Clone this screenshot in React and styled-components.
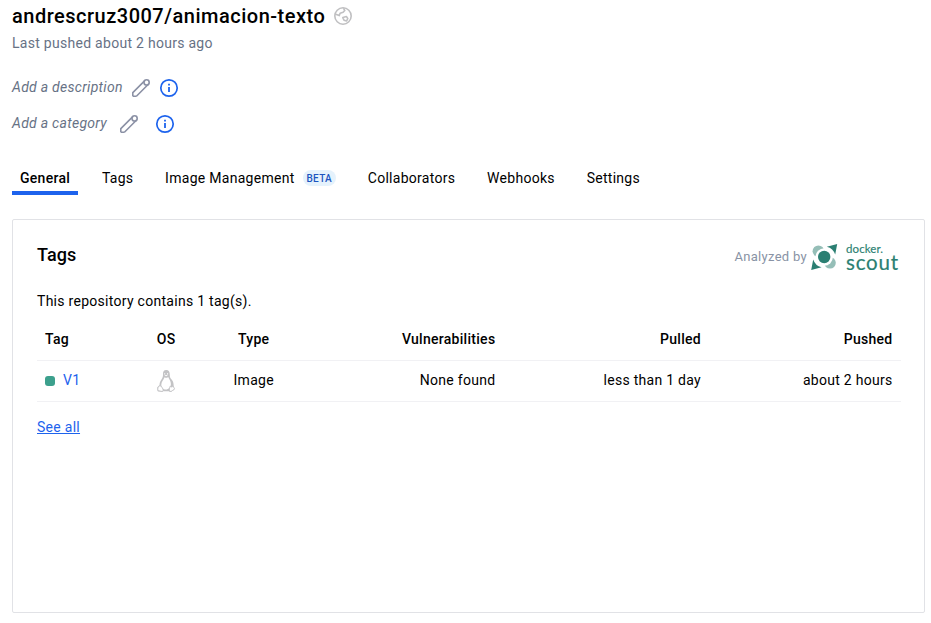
import React from "react";
import styled, { createGlobalStyle } from "styled-components";

const GlobalStyle = createGlobalStyle`
  *, *::before, *::after { box-sizing: border-box; }
  body {
    margin: 0;
    background: #fff;
    color: #000;
    font-family: Roboto, "Liberation Sans", sans-serif;
    font-size: 14px;
    line-height: 20px;
    letter-spacing: 0.28px;
  }
`;

const Page = styled.main`
  width: 931px;
  height: 623px;
  padding: 0 6px 10px 12px;
  display: flex;
  flex-direction: column;
  overflow: hidden;
`;

const TitleRow = styled.header`
  display: flex;
  align-items: center;
  gap: 8px;
  height: 32px;
`;

const Title = styled.h1`
  margin: 0;
  font-size: 20px;
  font-weight: 500;
  line-height: 32px;
  letter-spacing: 0.5px;
`;

const Pushed = styled.p`
  margin: 1px 0 0;
  color: #677285;
`;

const MetaList = styled.div`
  margin-top: 17px;
`;

const MetaRow = styled.div`
  display: flex;
  align-items: center;
  height: 36px;
`;

const MetaText = styled.span`
  color: #677285;
  font-style: italic;
  margin-right: ${(p) => p.$gap};
  padding-bottom: 2px;
`;

const IconGap = styled.span`
  width: ${(p) => p.$width};
`;

const Tabs = styled.nav`
  display: flex;
  margin-top: 20px;
  gap: 15.8px;
`;

const Tab = styled.a`
  display: flex;
  align-items: center;
  gap: 8px;
  height: 33px;
  padding: 2px 8px 0;
  border-bottom: 4px solid ${(p) => (p.$active ? "#1d63ed" : "transparent")};
  font-weight: ${(p) => (p.$active ? 500 : 400)};
`;

const Badge = styled.span`
  height: 16px;
  padding: 0 4px;
  border-radius: 8px;
  background: #e5f2fc;
  color: #1c54c0;
  font-size: 10px;
  font-weight: 500;
  line-height: 17px;
`;

const Card = styled.section`
  flex: 1;
  margin-top: 24px;
  padding: 22px 24px;
  border: 1px solid #e1e2e6;
  border-radius: 2px;
`;

const CardHeader = styled.div`
  display: flex;
  justify-content: space-between;
  align-items: flex-start;
  height: 49px;
`;

const CardTitle = styled.h2`
  margin: 0;
  font-size: 18px;
  font-weight: 500;
  line-height: 26px;
  letter-spacing: 0.1px;
`;

const Analyzed = styled.div`
  display: flex;
  align-items: center;
  height: 30px;
  color: #8993a5;
  font-size: 13px;
  letter-spacing: 0.3px;
  gap: 4px;
  margin-right: 1px;
`;

const Summary = styled.p`
  margin: 0;
`;

const Table = styled.div`
  margin-top: 7px;
  width: 863.5px;
`;

const Row = styled.div`
  display: grid;
  grid-template-columns: 92px 74.4px 100.6px 199.4px 205.6px 1fr;
  align-items: center;
  height: ${(p) => (p.$head ? "43px" : "41px")};
  padding-bottom: ${(p) => (p.$head ? "1px" : "2px")};
  border-bottom: 1px solid #f1f1f4;
  font-weight: ${(p) => (p.$head ? 500 : 400)};
`;

const Cell = styled.div`
  display: flex;
  align-items: center;
  justify-content: ${(p) => p.$align || "flex-start"};
  height: 20px;
  padding: 0 8px;
`;

const Status = styled.span`
  width: 10px;
  height: 10px;
  margin: 2px 8px 0 0;
  border-radius: 3px;
  background: #3ca08d;
`;

const TagLink = styled.a`
  color: #1d63ed;
`;

const SeeAll = styled.a`
  display: inline-block;
  margin-top: 15px;
  color: #1d63ed;
  text-decoration: underline;
`;

const Wordmark = styled.div`
  display: flex;
  flex-direction: column;
  width: 53px;
  height: 30px;
  margin-left: 4px;
  color: #2b7f72;
  font-family: Lato, sans-serif;
  font-weight: 400;
  white-space: nowrap;
`;

const DockerWord = styled.span`
  font-size: 11.5px;
  line-height: 13px;
  letter-spacing: 0.1px;
  -webkit-text-stroke: 0.15px #2b7f72;
`;

const ScoutWord = styled.span`
  font-size: 20.5px;
  line-height: 15px;
  letter-spacing: 0.8px;
  -webkit-text-stroke: 0.2px #2b7f72;
`;

const Globe = () => (
  <svg width="20" height="20" viewBox="0 0 20 20" fill="none" stroke="#c0c0c2" strokeWidth="1.6" strokeLinejoin="round">
    <circle cx="10" cy="10" r="8.2" />
    <path d="M2 8l4.2 1.6.9-2.4 3-1 1.7-1.8-1.4-2.2" />
    <path d="M9.8 11.6l3.6-1 1.4 1.8-1.2 2.6-2.6-.8z" />
  </svg>
);

const Pencil = () => (
  <svg width="20" height="20" viewBox="0 0 20 20" fill="none" stroke="#8b91a5" strokeWidth="1.6" strokeLinejoin="round">
    <path d="M1.8 18.2v-3.6L13.8 2.6M5.4 18.2H1.8M5.4 18.2L17.4 6.2" />
    <circle cx="15.6" cy="4.4" r="2.6" />
  </svg>
);

const Info = () => (
  <svg width="20" height="20" viewBox="0 0 20 20" fill="none" stroke="#1d63ed">
    <circle cx="10" cy="10" r="8.2" strokeWidth="1.7" />
    <path d="M10 5.8v1.8M10 9v5" strokeWidth="1.8" />
  </svg>
);

const PenguinIcon = styled.svg`
  flex: none;
  margin-top: 2px;
`;

const Penguin = () => (
  <PenguinIcon width="20" height="24" viewBox="0 0 20 24">
    <path fill="#c3c3c5" d="M10.2 1C7.7 1 6.9 2.8 7 5.1c.1 2.4-.3 3.5-1.7 5.6C4.1 12.5 3.5 14 3.5 16l-2.1 2.3c-.5.8.3 1.3 0 2.6-.2 1.2.6 1.4 2 1.7 1.8.4 3 .9 3.7-.3h5.7c.9 1.4 2.6.7 3.5-.2 1-.9 2.5-1.1 2.4-2.1-.1-.7-1-.8-1.1-2.3.3-2.7-.3-5-2-7.1-1.4-1.8-1.8-2.4-1.8-4.9C13.8 2.8 12.8 1 10.2 1z" />
    <path fill="#fff" d="M8.6 8.2c1.2 1 2.2.8 3.6-.2 1 2.4 2.7 4.1 2.7 7 0 2.8-2.2 5.6-5.1 5.6-2.4 0-4.5-2-4.5-4.8 0-2.9 2.1-4.9 3.3-7.6z" />
    <path fill="#fff" stroke="#c3c3c5" strokeWidth=".9" d="M3.8 16.6c1.2-.2 3.1 3 3.4 4.4.1 1.3-1.1 1.6-2.4 1.2-1.3-.5-3-.3-3-1.2 0-.8.2-1.6 0-2.3.6-.7 1.3-.8 2-2.1zM14 17.3c1 1 2.4.7 3.2-.3.5.6.4 1.8 1.2 2.4.4.8-.8 1.2-1.8 2-1 .9-2.4 1.4-3.1.5-.6-1.1.1-2.7.5-4.6z" />
    <path fill="#fff" d="M8.2 4.2h1v1.2h-1zM11 4.2h1.1v1.2H11zM8.3 6.5l1.8.8 1.9-.8-1.9-.4z" />
  </PenguinIcon>
);

const ScoutMark = () => (
  <svg width="27" height="30" viewBox="0 0 27 30">
    <circle cx="7.4" cy="9.2" r="5.8" fill="#95beb7" />
    <circle cx="19" cy="20.8" r="5.8" fill="#95beb7" />
    <circle cx="13.2" cy="15" r="8.7" fill="#fff" />
    <path fill="#2b7f72" d="M26.2 2l-2 10.6A12 12 0 0 0 15.8 4.7zM.2 28l2-10.6a12 12 0 0 0 8.4 7.9z" />
    <circle cx="13.2" cy="15" r="6.2" fill="#2b7f72" />
  </svg>
);

const tabs = [
  { label: "General", active: true },
  { label: "Tags" },
  { label: "Image Management", badge: "BETA" },
  { label: "Collaborators" },
  { label: "Webhooks" },
  { label: "Settings" },
];

export default function App() {
  return (
    <Page>
      <GlobalStyle />
      <TitleRow>
        <Title>andrescruz3007/animacion-texto</Title>
        <Globe />
      </TitleRow>
      <Pushed>Last pushed about 2 hours ago</Pushed>
      <MetaList>
        <MetaRow>
          <MetaText $gap="8px">Add a description</MetaText>
          <Pencil />
          <IconGap $width="8px" />
          <Info />
        </MetaRow>
        <MetaRow>
          <MetaText $gap="12px">Add a category</MetaText>
          <Pencil />
          <IconGap $width="16px" />
          <Info />
        </MetaRow>
      </MetaList>
      <Tabs>
        {tabs.map((tab) => (
          <Tab key={tab.label} $active={tab.active}>
            {tab.label}
            {tab.badge && <Badge>{tab.badge}</Badge>}
          </Tab>
        ))}
      </Tabs>
      <Card>
        <CardHeader>
          <CardTitle>Tags</CardTitle>
          <Analyzed>
            Analyzed by
            <ScoutMark />
            <Wordmark>
              <DockerWord>docker.</DockerWord>
              <ScoutWord>scout</ScoutWord>
            </Wordmark>
          </Analyzed>
        </CardHeader>
        <Summary>This repository contains 1 tag(s).</Summary>
        <Table>
          <Row $head>
            <Cell>Tag</Cell>
            <Cell $align="center">OS</Cell>
            <Cell $align="center">Type</Cell>
            <Cell $align="flex-end">Vulnerabilities</Cell>
            <Cell $align="flex-end">Pulled</Cell>
            <Cell $align="flex-end">Pushed</Cell>
          </Row>
          <Row>
            <Cell>
              <Status />
              <TagLink>V1</TagLink>
            </Cell>
            <Cell $align="center"><Penguin /></Cell>
            <Cell $align="center">Image</Cell>
            <Cell $align="flex-end">None found</Cell>
            <Cell $align="flex-end">less than 1 day</Cell>
            <Cell $align="flex-end">about 2 hours</Cell>
          </Row>
        </Table>
        <SeeAll>See all</SeeAll>
      </Card>
    </Page>
  );
}
